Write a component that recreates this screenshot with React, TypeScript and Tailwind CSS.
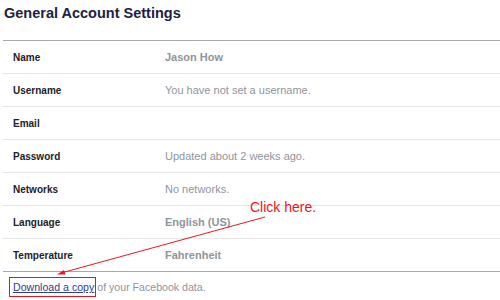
const rows: { label: string; value: string; strong?: boolean }[] = [
  { label: "Name", value: "Jason How", strong: true },
  { label: "Username", value: "You have not set a username." },
  { label: "Email", value: "" },
  { label: "Password", value: "Updated about 2 weeks ago." },
  { label: "Networks", value: "No networks." },
  { label: "Language", value: "English (US)", strong: true },
  { label: "Temperature", value: "Fahrenheit", strong: true },
];

export default function App() {
  return (
    <div className="relative h-[300px] w-[500px] overflow-hidden bg-white pl-[3px] font-['Liberation_Sans',Arial,sans-serif]">
      <h1 className="h-[40px] pl-[1px] pt-[4px] text-[14.5px] font-bold leading-[18px] text-[#1c2142]">
        General Account Settings
      </h1>

      <div className="border-t border-[#a9a9a9]">
        {rows.map((r, i) => (
          <div
            key={r.label}
            className={
              i === rows.length - 1
                ? "flex h-[33px] items-center border-b border-[#a9a9a9] pl-[10px]"
                : "flex h-[33px] items-center border-b border-[#e6e6e6] pl-[10px]"
            }
          >
            <span className="w-[152px] text-[10px] font-bold text-[#1d2129]">
              {r.label}
            </span>
            <span
              className={
                r.strong
                  ? "text-[11px] font-bold text-[#90949c]"
                  : "text-[11px] text-[#90949c]"
              }
            >
              {r.value}
            </span>
          </div>
        ))}
      </div>

      <div className="pl-[6px] pt-[5px] text-[10.6px] leading-[14px] text-[#90949c]">
        <span className="inline-block border border-[#e4141b] py-[2px] pl-[3px] pr-[1px]">
          <a href="#" className="text-[#2d3d8f] underline">
            Download a copy
          </a>
        </span>
        <span className="ml-[1px]">of your Facebook data.</span>
      </div>

      {/* annotation overlay */}
      <span className="absolute left-[250px] top-[199px] text-[14px] leading-[16px] text-[#f0141e]">
        Click here.
      </span>
      <svg
        className="pointer-events-none absolute left-0 top-0"
        width="500"
        height="300"
        viewBox="0 0 500 300"
      >
        <line x1="265" y1="217" x2="61" y2="273" stroke="#f0141e" strokeWidth="1" />
        <path d="M57 274.5 L64 270 L65.5 274.5 Z" fill="#f0141e" />
      </svg>
    </div>
  );
}
